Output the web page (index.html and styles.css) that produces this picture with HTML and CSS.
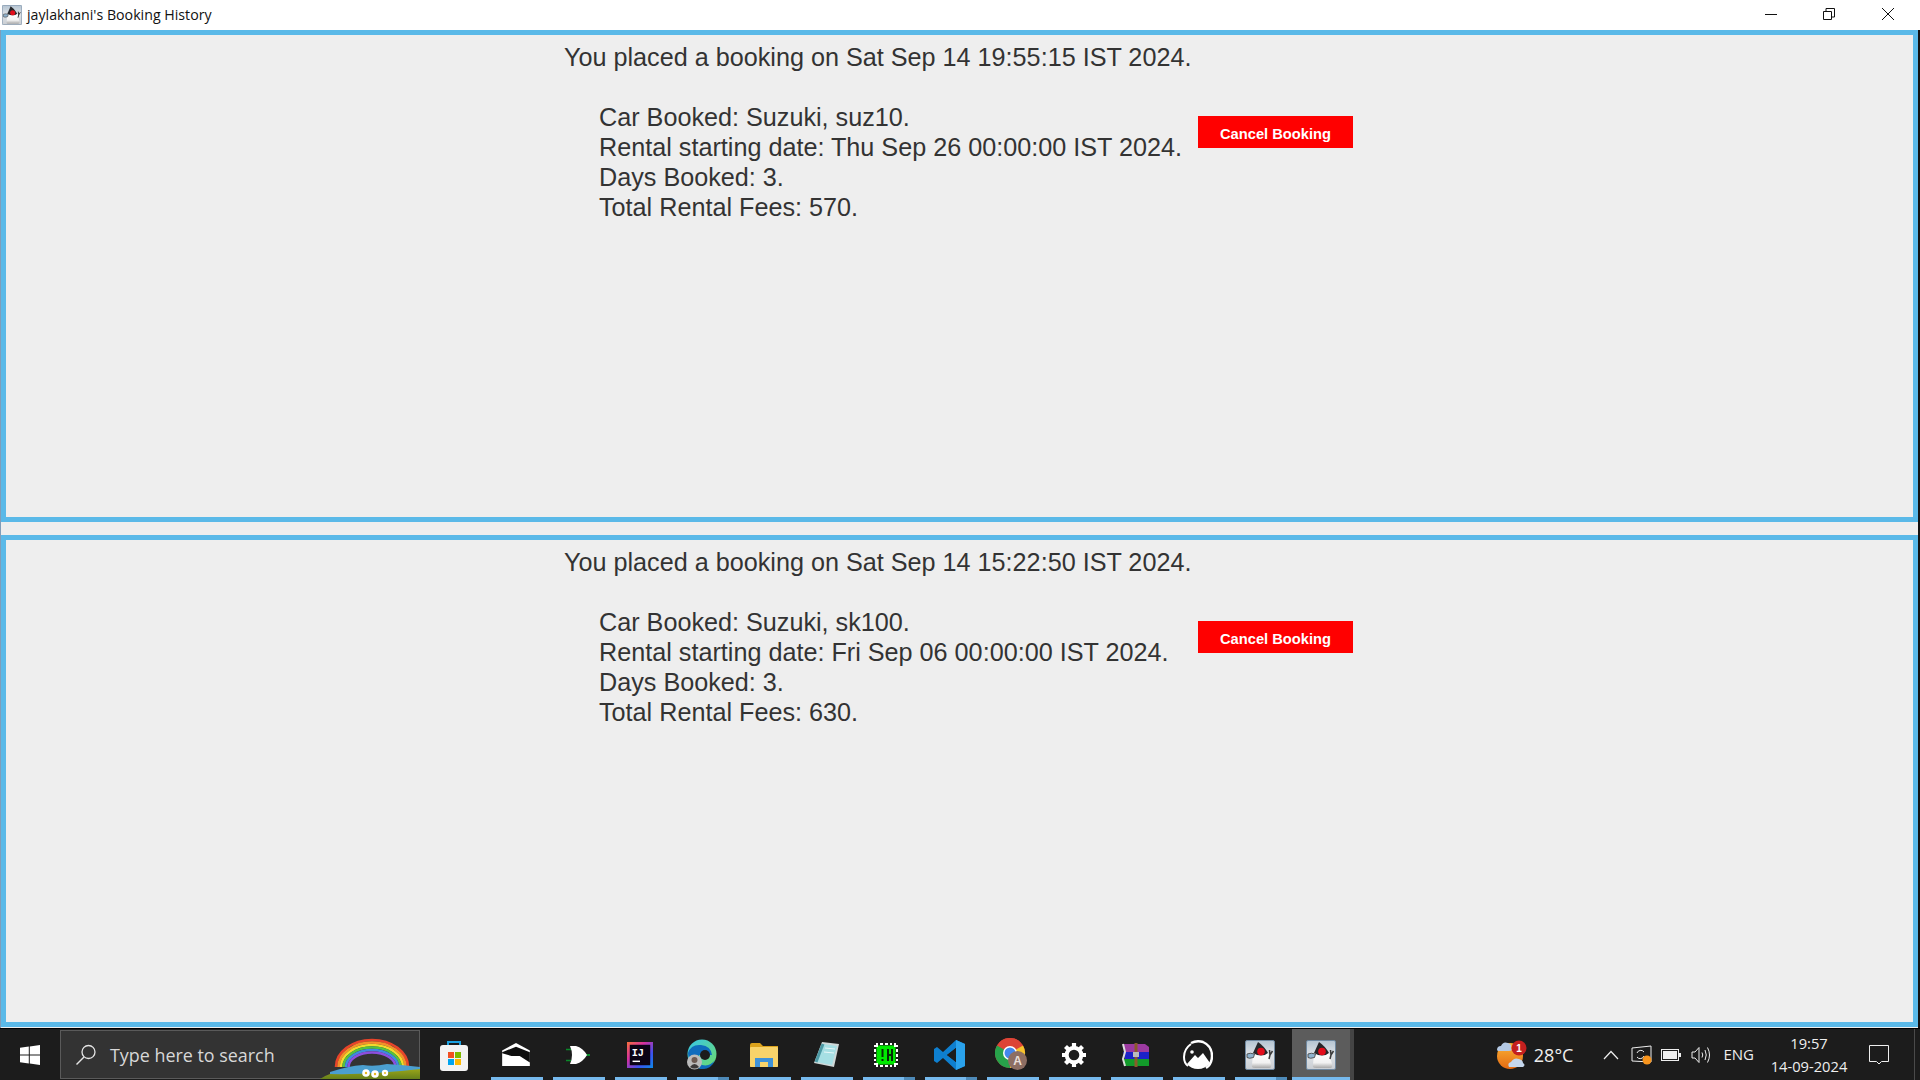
FILE: index.html
```html
<!DOCTYPE html>
<html lang="en">
<head>
<meta charset="utf-8">
<title>jaylakhani's Booking History</title>
<link rel="stylesheet" href="styles.css">
</head>
<body>
<svg class="defs" width="0" height="0" aria-hidden="true">
  <defs>
    <linearGradient id="dukebg" x1="0" y1="0" x2="0" y2="1"><stop offset="0" stop-color="#b4c4d2"/><stop offset=".5" stop-color="#dfe3e7"/><stop offset="1" stop-color="#c9cdd2"/></linearGradient>
    <linearGradient id="dukebody" x1="0" y1="0" x2="0" y2="1"><stop offset="0" stop-color="#fff"/><stop offset=".65" stop-color="#f2f2f2"/><stop offset="1" stop-color="#a9a9a9"/></linearGradient>
    <linearGradient id="ijg" x1="0" y1="0" x2="1" y2="1"><stop offset="0" stop-color="#f9703c"/><stop offset=".35" stop-color="#d6309f"/><stop offset=".7" stop-color="#3b52f0"/><stop offset="1" stop-color="#0c8be8"/></linearGradient>
    <linearGradient id="edgeg" x1="0" y1="0" x2="1" y2="1"><stop offset="0" stop-color="#36c5e8"/><stop offset="1" stop-color="#6fdc6a"/></linearGradient>
    <linearGradient id="hill" x1="0" y1="0" x2="0" y2="1"><stop offset="0" stop-color="#9aa51a"/><stop offset="1" stop-color="#66801a"/></linearGradient>
    <linearGradient id="sun" x1="0" y1="0" x2="0" y2="1"><stop offset="0" stop-color="#fbb437"/><stop offset="1" stop-color="#e46a12"/></linearGradient>
    <filter id="soft"><feGaussianBlur stdDeviation=".45"/></filter>
    <symbol id="duke" viewBox="0 0 30 30">
      <rect x=".5" y=".5" width="29" height="29" rx="1.500" fill="url(#dukebg)" stroke="#6f88a0"/>
      <g filter="url(#soft)">
        <path d="M8 13 L7 25 Q6 28 10 28 H24 Q27 28 26 24 L23 13Z" fill="url(#dukebody)"/>
        <path d="M13 2 L8 13 Q12 15.500 16 15.500 Q20 15.500 23 13 Q19 6 13 2Z" fill="#26262a"/>
        <circle cx="16" cy="11.500" r="3.800" fill="#e2101a"/>
        <path d="M2 14 Q5 12.500 9.500 14 L8.500 17.500 Q4 19 2 17.500Z" fill="#8fb3cf" stroke="#4a4a4a" stroke-width=".9"/>
        <path d="M24.500 10 L25 15 L27.500 11 M25 15 L24 19" stroke="#3a3a3a" stroke-width="1.500" fill="none"/>
      </g>
    </symbol>
  </defs>
</svg>

<header class="titlebar">
  <svg class="title-icon"><use href="#duke"/></svg>
  <span class="title-text">jaylakhani's Booking History</span>
  <div class="win-controls">
    <span class="win-btn"><svg width="14" height="14" viewBox="0 0 14 14"><path d="M1 7.500H13" stroke="#111" fill="none"/></svg></span>
    <span class="win-btn"><svg width="14" height="14" viewBox="0 0 14 14"><path d="M1.500 4.500H9.500V12.500H1.500ZM4 4.500V1.500H12.500V10H9.500" stroke="#111" fill="none"/></svg></span>
    <span class="win-btn"><svg width="14" height="14" viewBox="0 0 14 14"><path d="M1 1L13 13M13 1L1 13" stroke="#111" fill="none"/></svg></span>
  </div>
</header>

<main class="window">
  <section class="panel">
    <h2 class="placed">You placed a booking on Sat Sep 14 19:55:15 IST 2024.</h2>
    <div class="panel-body">
      <div class="details">
        <p>Car Booked: Suzuki, suz10.</p>
        <p>Rental starting date: Thu Sep 26 00:00:00 IST 2024.</p>
        <p>Days Booked: 3.</p>
        <p>Total Rental Fees: 570.</p>
      </div>
      <button class="cancel" type="button">Cancel Booking</button>
    </div>
  </section>
  <section class="panel">
    <h2 class="placed">You placed a booking on Sat Sep 14 15:22:50 IST 2024.</h2>
    <div class="panel-body">
      <div class="details">
        <p>Car Booked: Suzuki, sk100.</p>
        <p>Rental starting date: Fri Sep 06 00:00:00 IST 2024.</p>
        <p>Days Booked: 3.</p>
        <p>Total Rental Fees: 630.</p>
      </div>
      <button class="cancel" type="button">Cancel Booking</button>
    </div>
  </section>
</main>

<footer class="taskbar">
  <div class="start">
    <svg width="20" height="20" viewBox="0 0 20 20"><path fill="#fff" d="M0 2.800L8.800 1.600V9.500H0ZM9.800 1.400L20 0V9.500H9.800ZM0 10.500H8.800V18.400L0 17.200ZM9.800 10.500H20V20L9.800 18.600Z"/></svg>
  </div>
  <div class="search">
    <svg class="search-glass" width="22" height="22" viewBox="0 0 22 22"><circle cx="13.500" cy="8" r="6.500" fill="none" stroke="#e4e4e4" stroke-width="1.300"/><path d="M9 13L1.500 20.500" stroke="#e4e4e4" stroke-width="1.500"/></svg>
    <span class="search-text">Type here to search</span>
    <svg class="rainbow" width="100" height="48" viewBox="0 0 100 48">
      <g fill="none" stroke-width="2.600" transform="translate(0 6)">
        <path d="M16 30A36 27 0 0 1 88 30" stroke="#e8442a"/>
        <path d="M18.500 30A33.500 24.500 0 0 1 85.500 30" stroke="#f5902a"/>
        <path d="M21 30A31 22 0 0 1 83 30" stroke="#f2da2c"/>
        <path d="M23.500 30A28.500 19.500 0 0 1 80.500 30" stroke="#55c23f"/>
        <path d="M26 30A26 17 0 0 1 78 30" stroke="#3f8be0"/>
        <path d="M28.500 30A23.500 14.500 0 0 1 75.500 30" stroke="#8c4fe0"/>
      </g>
      <path d="M10 41 Q28 35 43 34 Q54 36 67 33 Q84 34 100 36 V46 H10Z" fill="#4b9fd0"/>
      <path d="M0 48 Q4 45 10 43 Q50 44 100 38 V48Z" fill="url(#hill)"/>
      <g fill="#fff"><circle cx="46" cy="42" r="3.800"/><circle cx="55" cy="43" r="3.800"/><circle cx="65" cy="42" r="3.200"/></g>
      <g fill="#e8b820"><circle cx="46" cy="42" r="1.200"/><circle cx="55" cy="43" r="1.200"/><circle cx="65" cy="42" r="1"/></g>
    </svg>
  </div>

  <div class="apps">
    <div class="app">
      <svg width="32" height="32" viewBox="0 0 32 32"><path d="M10 7V3H22V7" fill="none" stroke="#1ba1e2" stroke-width="2"/><rect x="2" y="6" width="28" height="26" rx="3" fill="#f3f3f3"/><rect x="10" y="13" width="6" height="6" fill="#f25022"/><rect x="17" y="13" width="6" height="6" fill="#7fba00"/><rect x="10" y="20" width="6" height="6" fill="#00a4ef"/><rect x="17" y="20" width="6" height="6" fill="#ffb900"/></svg>
    </div>
    <div class="app open">
      <svg width="30" height="24" viewBox="0 0 32 26"><path d="M1 8L16 0L31 8V25H1Z" fill="#fff"/><path d="M1 10L16 4L31 10V21L20 14L11 14L1 11Z" fill="#0d0d0d"/></svg>
    </div>
    <div class="app open">
      <svg width="24" height="18" viewBox="0 0 24 18"><path d="M0 3.500H5M0 14.500H5" stroke="#0a8a2a" stroke-width="1.500"/><path d="M20 9H24" stroke="#0a8a2a" stroke-width="2"/><path d="M4 0H10Q17 2 21 9Q17 16 10 18H4Q8 9 4 0Z" fill="#fff"/></svg>
    </div>
    <div class="app open">
      <svg width="26" height="26" viewBox="0 0 28 28"><rect width="28" height="28" fill="url(#ijg)"/><rect x="3" y="3" width="22" height="22" fill="#0b0315"/><text x="5" y="15" class="ij">IJ</text><rect x="6" y="20" width="8" height="1.600" fill="#fff"/></svg>
    </div>
    <div class="app open split">
      <svg width="32" height="32" viewBox="0 0 32 32"><circle cx="16" cy="15" r="14.500" fill="url(#edgeg)"/><path d="M2 14Q5 5 15 6Q25 7 26 16H13Q10 22 16 26Q24 28 29 21Q25 31 15 30Q3 28 2 14Z" fill="#0f6cbd"/><circle cx="19" cy="16" r="5" fill="#1c1c1c"/><circle cx="8.500" cy="23" r="7.500" fill="#bbb"/><circle cx="8.500" cy="21" r="3" fill="#6b5a52"/><path d="M4 28Q8.500 22 13 28Q8.500 31 4 28Z" fill="#3d3a3a"/></svg>
    </div>
    <div class="app open">
      <svg width="28" height="26" viewBox="0 0 28 26"><path d="M0 3Q0 1 2 1H10L13 4H28V24Q28 25 27 25H1Q0 25 0 24Z" fill="#dba21c"/><rect y="5" width="28" height="20" rx="1" fill="#f8d36a"/><path d="M5 25V16H23V25H18V20H10V25Z" fill="#3f92d8"/></svg>
    </div>
    <div class="app open">
      <svg width="28" height="28" viewBox="0 0 28 28"><path d="M10 1L27 3L22 26L2 22Z" fill="#cfd8d8"/><path d="M11 3L25 5L20 24L4 21Z" fill="#a6dfe4"/><path d="M4 21L11 3" stroke="#4d9aa5" stroke-width="3"/><path d="M13 7L23 8M12 11L22 12" stroke="#e9f7f8"/></svg>
    </div>
    <div class="app open split nudge-left">
      <svg width="24" height="24" viewBox="0 0 24 24"><rect x="2.500" y="2.500" width="19" height="19" fill="#00e800"/><path d="M0 3H3V0M21 0V3H24M24 21H21V24M3 24V21H0M6 1H9M11 1H14M16 1H18M6 23H9M11 23H14M16 23H18M1 6V9M1 11V14M1 16V18M23 6V9M23 11V14M23 16V18" fill="none" stroke="#fff" stroke-width="2"/><path d="M8.500 6V14M8.500 16V18M14 6V18M18 6V18M14 12H18" stroke="#072a07" stroke-width="2"/></svg>
    </div>
    <div class="app open split">
      <svg width="32" height="32" viewBox="0 0 32 32"><path d="M22 1L31 5V27L22 31L9 19L3 24L0 22V10L3 8L9 13ZM22 9L13 16L22 23Z" fill="#0e7fcf"/><path d="M22 1L31 5V27L22 31Z" fill="#2aa2ec"/><path d="M22 9L13 16L22 23Z" fill="#1c1c1c"/></svg>
    </div>
    <div class="app open">
      <svg width="34" height="34" viewBox="0 0 34 34"><circle cx="15" cy="15" r="15" fill="#dd4437"/><path d="M15 15L28 7.500A15 15 0 0 1 15 30Z" fill="#f5c32c"/><path d="M15 15L15 30A15 15 0 0 1 2 7.500Z" fill="#27a24a"/><path d="M2 7.500A15 15 0 0 1 28 7.500H15Z" fill="#dd4437"/><circle cx="15" cy="15" r="7" fill="#fff"/><circle cx="15" cy="15" r="5.500" fill="#4487ee"/><circle cx="22.500" cy="22.500" r="9.500" fill="#8d6e63"/><text x="22.500" y="27" class="badge-a">A</text></svg>
    </div>
    <div class="app open">
      <svg width="24" height="24" viewBox="0 0 24 24"><circle cx="12" cy="12" r="7.300" fill="none" stroke="#fff" stroke-width="4"/><g stroke="#fff" stroke-width="4.200"><path d="M12 0V4M12 20V24M0 12H4M20 12H24M3.500 3.500L6.300 6.300M17.700 17.700L20.500 20.500M3.500 20.500L6.300 17.700M17.700 6.300L20.500 3.500"/></g></svg>
    </div>
    <div class="app open">
      <svg width="28" height="24" viewBox="0 0 28 24"><path d="M1 1H23L27 4V9H3Z" fill="#9c3aa0"/><path d="M1 9H27V16H3Z" fill="#1c22c8"/><path d="M1 16H27V23H3Z" fill="#129a2a"/><path d="M1 1L3 9L1 16L3 23" stroke="#ddd" stroke-width="2" fill="none"/><path d="M14 0V24" stroke="#8a5a2a" stroke-width="3"/><rect x="11" y="9" width="6" height="5" fill="#bbb"/></svg>
    </div>
    <div class="app open">
      <svg width="30" height="30" viewBox="0 0 30 30"><path d="M8 3Q14 0 20 2Q29 6 29 16Q29 24 23 28" fill="none" stroke="#fff" stroke-width="2.400"/><path d="M8 4Q1 9 1 17Q1 23 5 26" fill="none" stroke="#fff" stroke-width="2"/><path d="M4 24L12 15L15 18L20 13L27 23Q22 29 15 29Q8 29 4 24Z" fill="#fff"/><circle cx="9" cy="12" r="1.800" fill="#fff"/></svg>
    </div>
    <div class="app open split">
      <svg width="30" height="30"><use href="#duke"/></svg>
    </div>
    <div class="app open active">
      <svg width="30" height="30"><use href="#duke"/></svg>
    </div>
  </div>

  <div class="tray">
    <div class="weather">
      <svg width="32" height="30" viewBox="0 0 32 30"><circle cx="14" cy="16" r="13" fill="url(#sun)"/><path d="M1 10Q1 6 5 6Q7 1 12 3Q16 4 15 8Q17 11 13 11H3Q1 11 1 10Z" fill="#b4c9e4"/><path d="M13 27Q11 23 15 22Q18 17 23 19Q27 20 27 23Q30 25 27 27Z" fill="#c4d6ec"/><circle cx="23" cy="8" r="7.500" fill="#c4201f"/><text x="23" y="11.500" class="badge-one">1</text></svg>
      <span class="temp">28°C</span>
    </div>
    <div class="tray-icons">
      <svg class="tray-caret" width="16" height="10" viewBox="0 0 16 10"><path d="M1 9L8 1.500L15 9" fill="none" stroke="#eee" stroke-width="1.200"/></svg>
      <svg class="tray-net" width="22" height="20" viewBox="0 0 22 20"><path d="M1 3L20 1V17L1 16Z" fill="none" stroke="#eee"/><path d="M6 8A4 4 0 0 1 13 7M13 11A4 4 0 0 1 6 12" fill="none" stroke="#eee"/><circle cx="16" cy="15" r="4.500" fill="#f7941d"/></svg>
      <svg class="tray-batt" width="20" height="12" viewBox="0 0 20 12"><rect x=".5" y=".5" width="17" height="11" fill="none" stroke="#eee"/><rect x="2" y="2" width="14" height="8" fill="#eee"/><rect x="18" y="4" width="2" height="4" fill="#eee"/></svg>
      <svg width="20" height="18" viewBox="0 0 20 18"><path d="M1 6H4L8 1.500V16.500L4 12H1Z" fill="none" stroke="#eee"/><path d="M11 6.500Q12.500 9 11 11.500M14 4Q16.500 9 14 14M16.500 1.500Q20.500 9 16.500 16.500" fill="none" stroke="#eee"/></svg>
    </div>
    <span class="lang">ENG</span>
    <div class="clock"><span>19:57</span><span>14-09-2024</span></div>
    <div class="notify">
      <svg width="20" height="20" viewBox="0 0 20 20"><path d="M.5.500H19.500V16.500H12.500L10 19L7.500 16.500H.5Z" fill="none" stroke="#eee"/></svg>
    </div>
  </div>
</footer>
</body>
</html>
```
FILE: styles.css
```css
* { box-sizing: border-box; margin: 0; padding: 0; }
html, body { width: 1920px; height: 1080px; overflow: hidden; }
body { display: flex; flex-direction: column; background: #fff; font-family: "Liberation Sans", Arial, sans-serif; }
.defs { position: absolute; }

.titlebar { height: 30px; flex: none; display: flex; align-items: center; background: #fff; padding-left: 2px; }
.title-icon { width: 20px; height: 20px; flex: none; }
.title-text { margin-left: 5px; font: 14.200px/1 "Open Sans", "Noto Sans", sans-serif; color: #111; }
.win-controls { margin-left: auto; display: flex; padding-right: 3px; }
.win-btn { width: 58.500px; height: 30px; display: flex; align-items: center; justify-content: center; padding-bottom: 3px; }

.window { height: 998px; flex: none; display: flex; flex-direction: column; gap: 13px; padding: 0 2px 1px 1px; background: #eee; box-shadow: inset 1px 0 0 #7f9db9; position: relative; }
.window::after { content: ""; position: absolute; top: 0; bottom: 0; right: 0; width: 2px; background: #111; }
.panel { flex: 1; border: 5px solid #5ab9e8; background: #eee; color: #333; }
.placed { margin: 7px 0 30px 558px; font-size: 25.200px; font-weight: 400; line-height: 30px; white-space: nowrap; }
.panel-body { display: flex; align-items: flex-start; padding-left: 593px; }
.details { width: 599px; flex: none; font-size: 25.200px; line-height: 30px; white-space: nowrap; }
.cancel { margin-top: 14px; width: 155px; height: 32px; border: 0; padding-top: 4px; background: #f00; color: #fff; font: 700 14.700px "Liberation Sans", Arial, sans-serif; }

.taskbar { flex: 1; display: flex; background: #1c1c1c; border-top: 1px solid #000; color: #eee; }
.start { width: 60px; flex: none; display: flex; align-items: center; justify-content: center; }
.search { width: 360px; flex: none; position: relative; margin: 1px 0; display: flex; align-items: center; background: #333; border: 1px solid #5a5a5a; }
.search-glass { margin-left: 14px; flex: none; }
.search-text { margin-left: 13px; padding-top: 2px; font: 17.900px/1 "Open Sans", "Noto Sans", sans-serif; color: #d8d8d8; }
.rainbow { position: absolute; right: -1px; bottom: -1px; }

.apps { margin-left: 4px; display: flex; }
.app { width: 62px; flex: none; position: relative; display: flex; align-items: center; justify-content: center; padding-right: 2px; }
.app.open::after { content: ""; position: absolute; left: 5px; right: 5px; bottom: 0; height: 3px; background: #76b9ed; }
.app.split::before { content: ""; position: absolute; right: 5px; bottom: 0; width: 11px; height: 3px; background: #4e8ab8; z-index: 1; }
.app.nudge-left svg { margin-right: 4px; }
.app.active { background: #5c5c5c; border-right: 4px solid #444; padding-right: 0; }
.app.active::after { left: 0; right: 0; }
.ij { font: 700 11px "Liberation Mono", monospace; fill: #fff; }
.badge-a { font: 700 12px "Liberation Sans", sans-serif; fill: #eadfd8; text-anchor: middle; }
.badge-one { font: 700 10px "Liberation Sans", sans-serif; fill: #fff; text-anchor: middle; }

.tray { margin-left: auto; display: flex; align-items: center; color: #eee; }
.weather { display: flex; align-items: center; gap: 6px; margin-right: 30px; }
.temp { font: 18px/1 "Open Sans", "Noto Sans", sans-serif; }
.tray-icons { display: flex; align-items: center; }
.tray-caret { margin-right: 12px; }
.tray-net { margin-right: 8px; }
.tray-batt { margin-right: 10px; }
.lang { margin-left: 12px; font: 15px/1 "Open Sans", "Noto Sans", sans-serif; }
.clock { margin-left: 16px; width: 78px; display: flex; flex-direction: column; align-items: center; gap: 6px; font: 14.700px/1.100 "Open Sans", "Noto Sans", sans-serif; }
.notify { margin-left: 17px; width: 55px; height: 100%; display: flex; align-items: center; padding-left: 4px; position: relative; }
.notify::after { content: ""; position: absolute; top: 0; bottom: 0; right: 5px; width: 1px; background: #4a4a4a; }
```
